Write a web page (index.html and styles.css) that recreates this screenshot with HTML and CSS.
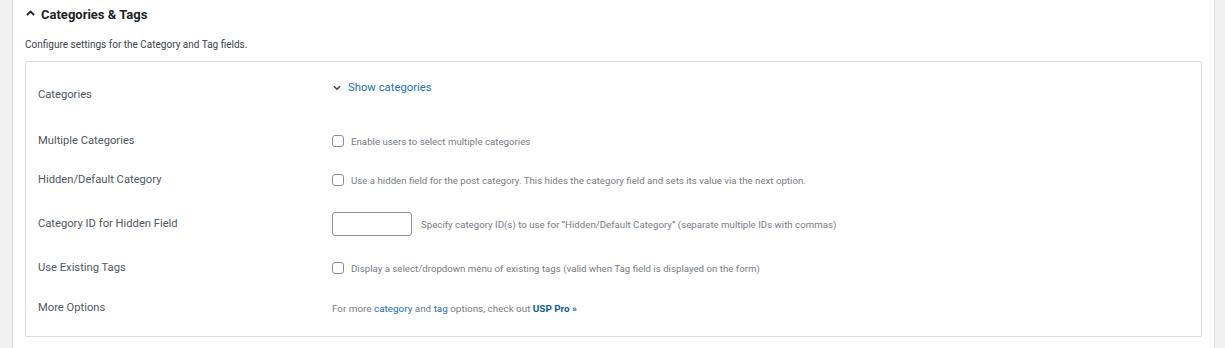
FILE: index.html
```html
<!DOCTYPE html>
<html lang="en">
<head>
  <meta charset="UTF-8" />
  <meta name="viewport" content="width=device-width, initial-scale=1.0" />
  <title>Categories &amp; Tags</title>
  <link rel="stylesheet" href="styles.css">
</head>
<body>
  <div class="page">
    <div class="panel">
      <h2 class="panel-title">
        <svg class="caret" width="9" height="6" viewBox="0 0 9 6"><path d="M1 5 L4.5 1.5 L8 5" fill="none" stroke="#1d2327" stroke-width="1.8"/></svg>
        Categories &amp; Tags
      </h2>
      <p class="panel-desc">Configure settings for the Category and Tag fields.</p>

      <div class="box">
        <!-- Categories -->
        <div class="row row-cats">
          <div class="label">Categories</div>
          <div class="field">
            <a class="toggle" href="#">
              <svg class="chev" width="8" height="6" viewBox="0 0 8 6"><path d="M1 1.2 L4 4.2 L7 1.2" fill="none" stroke="#3c434a" stroke-width="1.6"/></svg>
              Show categories
            </a>
          </div>
        </div>

        <div class="row row-multi">
          <div class="label">Multiple Categories</div>
          <div class="field">
            <label class="check"><input type="checkbox" /> Enable users to select multiple categories</label>
          </div>
        </div>

        <div class="row row-hidden">
          <div class="label">Hidden/Default Category</div>
          <div class="field">
            <label class="check"><input type="checkbox" /> Use a hidden field for the post category. This hides the category field and sets its value via the next option.</label>
          </div>
        </div>

        <div class="row row-catid">
          <div class="label">Category ID for Hidden Field</div>
          <div class="field">
            <input class="text-in" type="text" />
            <span class="hint">Specify category ID(s) to use for “Hidden/Default Category” (separate multiple IDs with commas)</span>
          </div>
        </div>

        <div class="row row-tags">
          <div class="label">Use Existing Tags</div>
          <div class="field">
            <label class="check"><input type="checkbox" /> Display a select/dropdown menu of existing tags (valid when Tag field is displayed on the form)</label>
          </div>
        </div>

        <div class="row row-more">
          <div class="label">More Options</div>
          <div class="field">
            <span class="hint more">For more <a href="#">category</a> and <a href="#">tag</a> options, check out <a class="pro" href="#">USP Pro &raquo;</a></span>
          </div>
        </div>
      </div>
    </div>
  </div>
</body>
</html>
```

FILE: styles.css
```css
* { margin: 0; padding: 0; box-sizing: border-box; }
body {
  font-family: Roboto, "Liberation Sans", Arial, sans-serif;
  background: #f0f0f1;
  color: #3c434a;
  height: 348px;
  overflow: hidden;
}
.page {
  padding: 0 10px 0 12px;
  height: 348px;
}
.panel {
  background: #fff;
  border-left: 1px solid #dcdcde;
  border-right: 1px solid #dcdcde;
  height: 100%;
  padding: 0 12px 0 12px;
}
.panel-title {
  display: flex;
  align-items: center;
  height: 28px;
  font-size: 13px;
  font-weight: 700;
  color: #1d2327;
  padding-left: 1px;
}
.caret {
  margin: 0 6px 2px 0;
}
.panel-desc {
  margin-top: 11px;
  font-size: 10px;
  color: #3c434a;
  line-height: 12px;
}
.box {
  margin-top: 10px;
  border: 1px solid #dcdcde;
  border-radius: 2px;
  height: 276px;
  padding: 1px 0 0 12px;
}
.row {
  display: flex;
  align-items: center;
}
.label {
  width: 294px;
  font-size: 11.2px;
  color: #50575e;
  line-height: 16px;
}
.field {
  display: flex;
  align-items: center;
  font-size: 9.7px;
  color: #787c82;
}
.row-cats { height: 55px; align-items: flex-start; }
.row-cats .label { padding-top: 24px; }
.row-cats .field { padding-top: 18px; }
.row-multi { height: 46px; }
.row-hidden { height: 32px; }
.row-catid { height: 56px; }
.row-tags { height: 32px; }
.row-more { height: 48px; }

.toggle {
  display: flex;
  align-items: center;
  color: #2271b1;
  font-size: 11.3px;
  text-decoration: none;
  line-height: 14px;
}
.chev { margin: 0 7px 0 1px; }
.check {
  display: flex;
  align-items: center;
}
.check input {
  appearance: none;
  width: 12px;
  height: 12px;
  border: 1px solid #8c8f94;
  border-radius: 3px;
  background: #fff;
  margin-right: 7px;
}
.text-in {
  width: 80px;
  height: 24px;
  border: 1px solid #8c8f94;
  border-radius: 3px;
  margin-right: 9px;
}
.hint.more { font-size: 9.9px; }
.hint a {
  color: #2271b1;
  text-decoration: none;
}
.hint a.pro { font-weight: 700; color: #135e96; }
```
